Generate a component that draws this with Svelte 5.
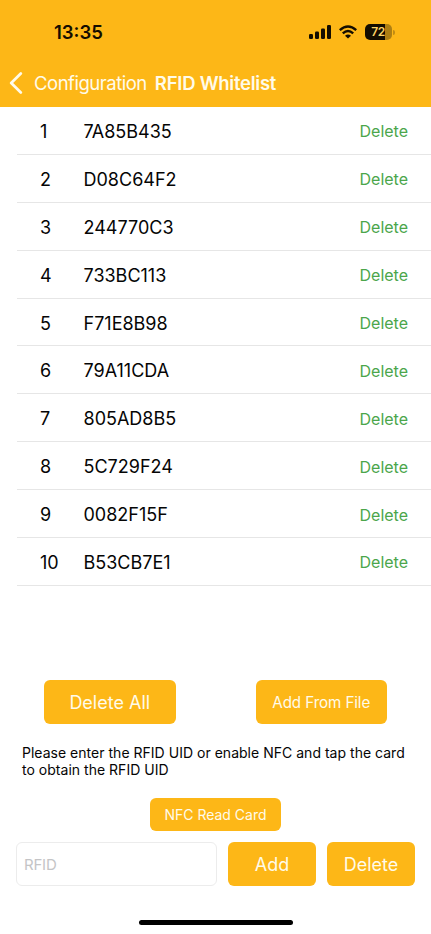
<script lang="ts">
  let cards = $state([
    '7A85B435',
    'D08C64F2',
    '244770C3',
    '733BC113',
    'F71E8B98',
    '79A11CDA',
    '805AD8B5',
    '5C729F24',
    '0082F15F',
    'B53CB7E1'
  ]);
  let rfid = $state('');

  function addCard() {
    const uid = rfid.trim().toUpperCase();
    if (uid && !cards.includes(uid)) {
      cards.push(uid);
      rfid = '';
    }
  }

  function removeCard(uid: string) {
    cards = cards.filter((card) => card !== uid);
  }
</script>

<div class="screen">
  <header>
    <div class="status-bar">
      <span class="time">13:35</span>
      <div class="status-icons">
        <svg class="signal" viewBox="0 0 22 14" aria-hidden="true">
          <rect x="0" y="9" width="4" height="5" rx="1.2" />
          <rect x="6" y="6.5" width="4" height="7.5" rx="1.2" />
          <rect x="12" y="3.5" width="4" height="10.5" rx="1.2" />
          <rect x="18" y="0" width="4" height="14" rx="1.2" />
        </svg>
        <svg class="wifi" viewBox="0 0 18 14" aria-hidden="true">
          <path d="M.8 5.1Q9-2.3 17.2 5.1" />
          <path d="M3.8 8.3Q9 3.6 14.2 8.3" />
          <path class="dot" d="M9 13.6 6 10.8Q9 8.4 12 10.8Z" />
        </svg>
        <div class="battery">
          <div class="battery-body">72</div>
          <div class="battery-tip"></div>
        </div>
      </div>
    </div>
    <nav>
      <button class="back" aria-label="Back">
        <svg viewBox="0 0 14 22" aria-hidden="true"><path d="M11.8 1.5 2.2 11l9.6 9.5" /></svg>
        <span>Configuration</span>
      </button>
      <h1>RFID Whitelist</h1>
    </nav>
  </header>

  <ul>
    {#each cards as uid, i (uid)}
      <li>
        <span class="index">{i + 1}</span>
        <span class="uid">{uid}</span>
        <button class="remove" onclick={() => removeCard(uid)}>Delete</button>
      </li>
    {/each}
  </ul>

  <footer>
    <div class="bulk-actions">
      <button class="btn" onclick={() => (cards = [])}>Delete All</button>
      <button class="btn btn-file">Add From File</button>
    </div>
    <p>Please enter the RFID UID or enable NFC and tap the card<br />to obtain the RFID UID</p>
    <button class="btn btn-nfc">NFC Read Card</button>
    <div class="entry">
      <input type="text" placeholder="RFID" bind:value={rfid} />
      <button class="btn" onclick={addCard}>Add</button>
      <button class="btn" onclick={() => removeCard(rfid.trim().toUpperCase())}>Delete</button>
    </div>
    <div class="home-indicator"></div>
  </footer>
</div>

<style>
  :global(body) {
    background: #fff;
  }

  .screen {
    display: flex;
    flex-direction: column;
    box-sizing: border-box;
    width: 431px;
    height: 934px;
    overflow: hidden;
    background: #fff;
    color: #050505;
    font-family: Inter, sans-serif;
  }

  button {
    padding: 0;
    border: 0;
    background: none;
    font-family: inherit;
    cursor: pointer;
  }

  header {
    flex: none;
    height: 107px;
    background: #fdb717;
  }

  .status-bar {
    display: flex;
    align-items: center;
    justify-content: space-between;
    height: 64px;
    padding: 0 36px 0 54px;
  }

  .time {
    color: #140d00;
    font-size: 18.5px;
    font-weight: 600;
  }

  .status-icons {
    display: flex;
    align-items: center;
  }

  .signal {
    width: 22px;
    height: 14px;
    margin-right: 8px;
    fill: #140d00;
  }

  .wifi {
    width: 18px;
    height: 14px;
    margin-right: 8px;
    fill: none;
    stroke: #140d00;
    stroke-width: 2.4;
  }

  .wifi .dot {
    fill: #140d00;
    stroke: none;
  }

  .battery {
    display: flex;
    align-items: center;
    gap: 1px;
  }

  .battery-body {
    box-sizing: border-box;
    width: 27px;
    height: 16px;
    padding-right: 1px;
    border-radius: 5px;
    background: linear-gradient(90deg, #140d00 74%, #ad7e13 74%);
    color: #ffd566;
    font-size: 12px;
    font-weight: 600;
    line-height: 16px;
    text-align: center;
    letter-spacing: -0.5px;
  }

  .battery-tip {
    width: 2px;
    height: 5px;
    border-radius: 0 2px 2px 0;
    background: #c18c13;
  }

  nav {
    display: flex;
    align-items: center;
    height: 38px;
    padding-left: 9px;
    color: #fffbea;
  }

  .back {
    display: flex;
    align-items: center;
    gap: 11px;
    color: inherit;
    font-size: 18.5px;
    letter-spacing: -0.48px;
  }

  .back svg {
    width: 14px;
    height: 22px;
    fill: none;
    stroke: currentColor;
    stroke-width: 2.7;
    stroke-linecap: round;
    stroke-linejoin: round;
  }

  h1 {
    margin: 0 0 0 8px;
    font-size: 18.5px;
    font-weight: 600;
    letter-spacing: -0.25px;
  }

  ul {
    flex: 1;
    margin: 0 0 0 17px;
    padding: 0;
    list-style: none;
  }

  li {
    display: flex;
    align-items: center;
    box-sizing: border-box;
    height: 47.9px;
    padding: 2px 23px 0;
    border-bottom: 1px solid #e6e6e6;
    font-size: 18px;
  }

  .index {
    width: 43.5px;
  }

  .remove {
    margin-left: auto;
    color: #4ba64b;
    font-size: 16px;
  }

  footer {
    display: flex;
    flex: none;
    flex-direction: column;
    height: 254px;
  }

  .btn {
    border-radius: 6px;
    background: #fdb717;
    color: #fffbea;
    font-size: 18px;
  }

  .bulk-actions {
    display: flex;
    justify-content: space-between;
    padding: 0 44px;
  }

  .bulk-actions .btn {
    width: 131.5px;
    height: 44px;
  }

  .bulk-actions .btn-file {
    font-size: 15.2px;
    letter-spacing: -0.1px;
  }

  p {
    margin: 20px 0 0 22px;
    font-size: 14px;
    line-height: 17px;
    letter-spacing: 0.02px;
    white-space: nowrap;
  }

  .btn-nfc {
    align-self: center;
    width: 131.5px;
    height: 33px;
    margin-top: 20px;
    font-size: 14px;
  }

  .entry {
    display: flex;
    gap: 11px;
    margin: 11px 16px 0;
  }

  .entry input {
    box-sizing: border-box;
    flex: 1;
    min-width: 0;
    height: 44px;
    padding: 0 7px;
    border: 1px solid #ececec;
    border-radius: 6px;
    outline: none;
    font-family: inherit;
    font-size: 15px;
    letter-spacing: -0.2px;
  }

  .entry input::placeholder {
    color: #c4c4c6;
  }

  .entry .btn {
    width: 88px;
    height: 44px;
  }

  .home-indicator {
    align-self: center;
    width: 154px;
    height: 5px;
    margin-top: 34px;
    border-radius: 3px;
    background: #000;
  }
</style>
